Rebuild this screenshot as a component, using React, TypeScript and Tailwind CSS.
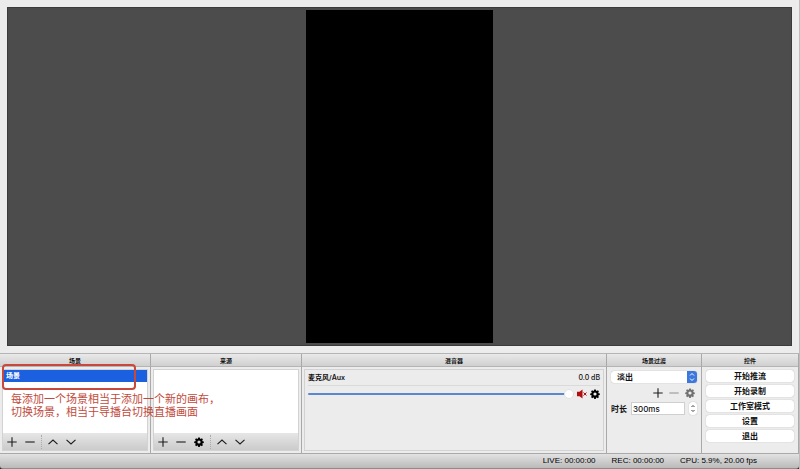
import { ReactNode } from 'react'

const GEAR =
  'M10 1h4l.6 3 2 .8 2.500-1.700 2.800 2.800-1.700 2.500.8 2 3 .6v4l-3 .6-.8 2 1.700 2.500-2.800 2.800-2.500-1.700-2 .8-.6 3h-4l-.6-3-2-.8-2.500 1.700-2.800-2.800 1.700-2.500-.8-2-3-.6v-4l3-.6.8-2-1.700-2.500 2.800-2.800 2.500 1.700 2-.8zM12 8.500a4 4 0 1 0 0 8 4 4 0 0 0 0-8z'

function GearIcon({ className }: { className?: string }) {
  return (
    <svg viewBox="0 0 24 25" className={className} fill="currentColor" fillRule="evenodd" aria-hidden="true">
      <path d={GEAR} />
    </svg>
  )
}

function LineIcon({ d }: { d: string }) {
  return (
    <svg viewBox="0 0 10 10" className="size-[10px]" fill="none" stroke="currentColor" strokeWidth="1.1" aria-hidden="true">
      <path d={d} />
    </svg>
  )
}

const PLUS = 'M5 .3v9.400M.3 5h9.400'
const MINUS = 'M.3 5h9.400'
const UP = 'M.5 7.200L5 3l4.500 4.200'
const DOWN = 'M.5 2.800L5 7l4.500-4.200'

function IconButton({ label, children }: { label: string; children: ReactNode }) {
  return (
    <button type="button" aria-label={label} className="flex size-[10px] shrink-0 items-center justify-center">
      {children}
    </button>
  )
}

function Dock({ title, className, children }: { title: string; className: string; children: ReactNode }) {
  return (
    <section className={`flex flex-col border-r border-[#a9a9a9] last:border-r-0 ${className}`}>
      <h2 className="h-[13px] border-b border-[#b5b5b5] bg-linear-to-b from-[#e9e9e9] to-[#d0d0d0] text-center text-[6px] leading-[13px] font-bold">
        {title}
      </h2>
      {children}
    </section>
  )
}

function Toolbar({ withSettings }: { withSettings?: boolean }) {
  return (
    <div className="flex h-[17px] items-center gap-2 bg-linear-to-b from-[#e6e6e6] to-[#cbcbcb] px-1 text-[#1c1c1c]">
      <IconButton label="添加">
        <LineIcon d={PLUS} />
      </IconButton>
      <IconButton label="移除">
        <LineIcon d={MINUS} />
      </IconButton>
      {withSettings && (
        <IconButton label="属性">
          <GearIcon className="size-[10px] text-black" />
        </IconButton>
      )}
      <div className="-mx-[2px] h-[14px] border-l border-dotted border-[#aaa]" />
      <IconButton label="上移">
        <LineIcon d={UP} />
      </IconButton>
      <IconButton label="下移">
        <LineIcon d={DOWN} />
      </IconButton>
    </div>
  )
}

const controls = ['开始推流', '开始录制', '工作室模式', '设置', '退出']

export default function App() {
  return (
    <main className="flex h-screen flex-col overflow-hidden border-r border-[#bdbdbd] bg-[#ececec] font-['Inter','Noto_Sans_CJK_SC',sans-serif] text-[8px] font-medium text-[#111]">
      <div className="flex min-h-0 flex-1 px-[7px] py-[7px]">
        <div className="flex flex-1 justify-center border border-[#3c3a3c] bg-[#4c4c4c] py-[2px]">
          <div className="aspect-[9/16] bg-black" />
        </div>
      </div>

      <div className="relative flex h-[100px] border-t border-[#b5b5b5]">
        <Dock title="场景" className="w-[151px]">
          <div className="m-[2px] flex flex-1 flex-col border border-[#d2d2d2] bg-white">
            <ul className="flex-1">
              <li className="h-3 bg-[#1a60df] px-[3px] text-[7px] leading-3 font-bold text-white">场景</li>
            </ul>
            <Toolbar />
          </div>
        </Dock>

        <Dock title="来源" className="w-[151px]">
          <div className="m-[2px] flex flex-1 flex-col border border-[#d2d2d2] bg-white">
            <ul className="flex-1" />
            <Toolbar withSettings />
          </div>
        </Dock>

        <Dock title="混音器" className="flex-1">
          <div className="m-[2px] flex-1 border border-[#d2d2d2] px-[3px] py-1 text-[7px]">
            <div className="flex h-[9px] items-center justify-between">
              <label htmlFor="volume" className="font-semibold">麦克风/Aux</label>
              <span>0.0 dB</span>
            </div>
            <div className="mt-[2px] border-t border-[#dadada]" />
            <div className="mt-[3px] flex h-[10px] items-center gap-[3px]">
              <input
                id="volume"
                type="range"
                defaultValue={100}
                className="h-[2px] min-w-0 flex-1 appearance-none rounded-full bg-[#5b87d0] [&::-webkit-slider-thumb]:size-[10px] [&::-webkit-slider-thumb]:appearance-none [&::-webkit-slider-thumb]:rounded-full [&::-webkit-slider-thumb]:border [&::-webkit-slider-thumb]:border-[#e2e2e2] [&::-webkit-slider-thumb]:bg-white"
              />
              <IconButton label="静音">
                <svg viewBox="0 0 10 10" className="size-[10px]" aria-hidden="true">
                  <path d="M0 2.800h2.500L5.500.6v8.800L2.500 7.200H0z" fill="#b30d12" />
                  <path d="M6.500 3.500l3 3M9.500 3.500l-3 3" stroke="#b30d12" />
                </svg>
              </IconButton>
              <IconButton label="音频设置">
                <GearIcon className="size-[10px] text-black" />
              </IconButton>
            </div>
          </div>
        </Dock>

        <Dock title="场景过渡" className="w-[95px]">
          <div className="flex flex-col gap-1 px-1 pt-1">
            <div className="relative flex">
              <select
                aria-label="场景过渡"
                className="h-3 w-full appearance-none rounded-[3px] bg-white px-[6px] leading-3 font-semibold shadow-[0_0_1px_#999]"
              >
                <option>淡出</option>
              </select>
              <svg viewBox="0 0 10 12" className="pointer-events-none absolute top-0 right-0 h-3 w-[10px] rounded-r-[3px] bg-[#3b77dc]" fill="none" stroke="white" aria-hidden="true">
                <path d="M3 4.500l2-2 2 2M3 7.500l2 2 2-2" />
              </svg>
            </div>
            <div className="flex h-[11px] items-center justify-end gap-[6px] pr-[2px] text-[#1c1c1c]">
              <IconButton label="添加转场">
                <LineIcon d={PLUS} />
              </IconButton>
              <button type="button" aria-label="移除转场" disabled className="text-[#999]">
                <LineIcon d={MINUS} />
              </button>
              <button type="button" aria-label="转场属性" disabled className="text-[#707070]">
                <GearIcon className="size-[10px]" />
              </button>
            </div>
            <div className="flex items-center gap-1">
              <label htmlFor="duration" className="shrink-0 font-semibold">时长</label>
              <input
                id="duration"
                defaultValue="300ms"
                className="h-[13px] min-w-0 flex-1 border border-[#cfcfcf] bg-white px-px leading-3"
              />
              <button type="button" aria-label="调整时长" className="h-[13px] w-2 rounded-[3px] bg-white shadow-[0_0_1px_#999]">
                <svg viewBox="0 0 8 13" fill="none" stroke="#444" aria-hidden="true">
                  <path d="M2.500 5L4 3.500 5.500 5M2.500 8L4 9.500 5.500 8" />
                </svg>
              </button>
            </div>
          </div>
        </Dock>

        <Dock title="控件" className="w-[97px]">
          <div className="flex flex-col gap-[3px] px-1 pt-[3px]">
            {controls.map((name) => (
              <button key={name} type="button" className="h-[12px] rounded-[3px] bg-white text-center leading-[12px] font-semibold shadow-[0_0_1px_#999]">
                {name}
              </button>
            ))}
          </div>
        </Dock>

        {/* tutorial callout over the scene list */}
        <div className="pointer-events-none absolute top-[10px] left-[2px] h-[26px] w-[134px] rounded-[4px] border-2 border-[#c8483c]" />
        <div className="pointer-events-none absolute top-[39px] left-[11px] text-[11px] leading-[13px] font-normal whitespace-nowrap text-[#c14a3c]">
          <p>每添加一个场景相当于添加一个新的画布，</p>
          <p>切换场景，相当于导播台切换直播画面</p>
        </div>
      </div>

      <div className="bg-[#222]">
        <footer className="flex h-4 items-center justify-end gap-4 rounded-b-[3px] border-t border-b border-t-[#a9a9a9] border-b-[#8c8c8c] bg-linear-to-b from-[#e2e2e2] to-[#bababa] pr-[42px] font-['Liberation_Sans',sans-serif] text-black">
          <span>LIVE: 00:00:00</span>
          <span>REC: 00:00:00</span>
          <span>CPU: 5.9%, 20.00 fps</span>
        </footer>
      </div>
    </main>
  )
}
